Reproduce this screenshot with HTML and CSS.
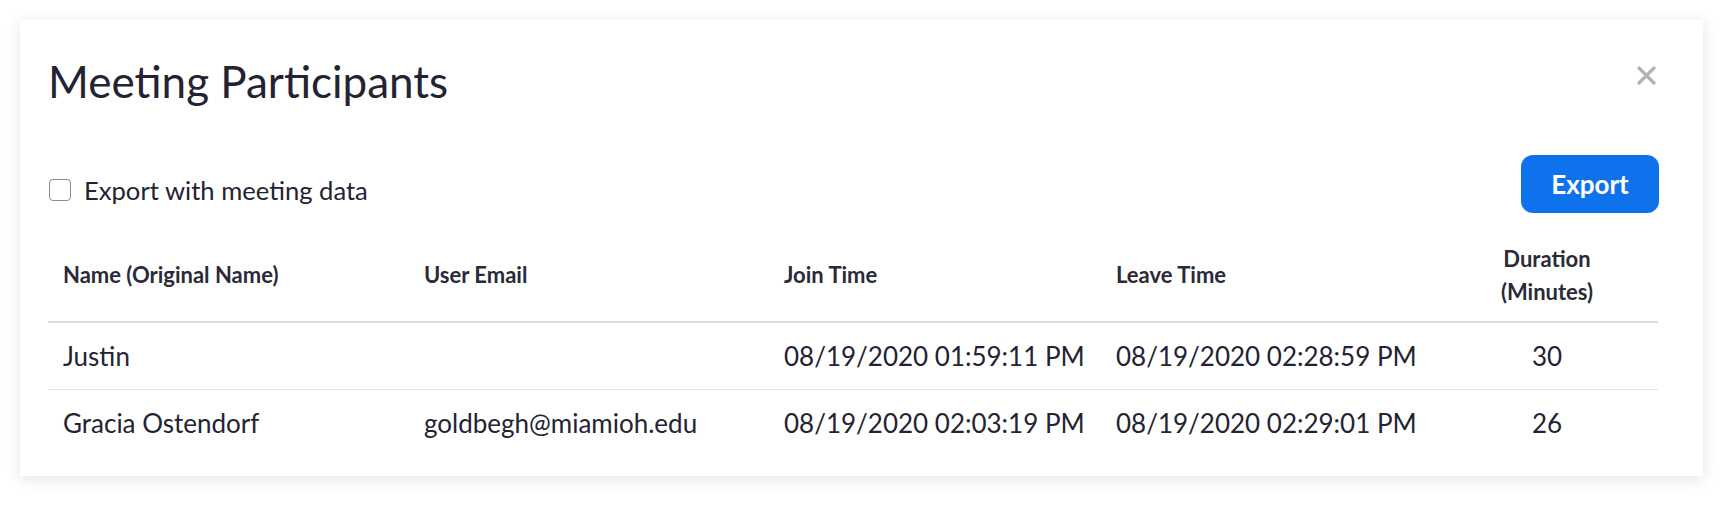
FILE: index.html
```html
<!DOCTYPE html>
<html lang="en">
<head>
<meta charset="utf-8">
<title>Meeting Participants</title>
<link rel="stylesheet" href="styles.css">
</head>
<body>
<div class="page">
  <div class="dialog">
    <div class="dialog-head">
      <h1 class="title">Meeting Participants</h1>
      <button class="close" aria-label="Close">
        <svg width="19" height="19" viewBox="0 0 19 19"><path d="M2 2 L17 17 M17 2 L2 17" stroke="#b3b3b3" stroke-width="3.2" stroke-linecap="round"/></svg>
      </button>
    </div>
    <div class="toolbar">
      <label class="check">
        <span class="box"></span>
        <span class="check-label">Export with meeting data</span>
      </label>
      <button class="export">Export</button>
    </div>
    <div class="table">
      <div class="row head">
        <div class="cell">Name (Original Name)</div>
        <div class="cell">User Email</div>
        <div class="cell">Join Time</div>
        <div class="cell">Leave Time</div>
        <div class="cell num">Duration<br>(Minutes)</div>
      </div>
      <div class="row">
        <div class="cell">Justin</div>
        <div class="cell"></div>
        <div class="cell">08/19/2020 01:59:11 PM</div>
        <div class="cell">08/19/2020 02:28:59 PM</div>
        <div class="cell num">30</div>
      </div>
      <div class="row last">
        <div class="cell">Gracia Ostendorf</div>
        <div class="cell">goldbegh@miamioh.edu</div>
        <div class="cell">08/19/2020 02:03:19 PM</div>
        <div class="cell">08/19/2020 02:29:01 PM</div>
        <div class="cell num">26</div>
      </div>
    </div>
  </div>
</div>
</body>
</html>
```

FILE: styles.css
```css
* { box-sizing: border-box; }
html, body { margin: 0; padding: 0; background: #ffffff; }
body {
  font-family: Lato, "Open Sans", sans-serif;
  color: #232333;
  width: 1736px;
  height: 509px;
  overflow: hidden;
}
.page {
  padding: 20px 0 0 20px;
}
.dialog {
  width: 1683px;
  height: 456px;
  background: #ffffff;
  box-shadow: 0 3px 14px rgba(0, 0, 0, 0.11);
  padding: 35px 44px 0 28px;
}
.dialog-head {
  display: flex;
  justify-content: space-between;
  align-items: flex-start;
}
.title {
  margin: 0;
  font-size: 44px;
  font-weight: 400;
  line-height: 53px;
  color: #232333;
}
.close {
  border: 0;
  background: none;
  padding: 0;
  margin: 11px 3px 0 0;
  width: 19px;
  height: 19px;
  display: block;
}
.close svg { display: block; }
.toolbar {
  margin-top: 47px;
  display: flex;
  justify-content: space-between;
  align-items: center;
}
.check {
  display: flex;
  align-items: center;
  gap: 13px;
  margin-top: 12px;
  margin-left: 1px;
}
.box {
  width: 22px;
  height: 22px;
  border: 1.5px solid #8c8c8c;
  border-radius: 4px;
  background: #fff;
}
.check-label {
  font-size: 25.6px;
  line-height: 30px;
  color: #232333;
}
.export {
  width: 138px;
  height: 58px;
  border: 0;
  border-radius: 12px;
  background: #0e72ed;
  color: #ffffff;
  font-family: Lato, "Open Sans", sans-serif;
  font-weight: 700;
  font-size: 26px;
  padding: 0;
}
.table {
  width: 1610px;
  margin-top: 15px;
}
.row {
  display: grid;
  grid-template-columns: 361px 360px 332px 335px 222px;
  align-items: center;
  height: 67px;
  border-bottom: 1.5px solid #e3e3e6;
}
.row.head {
  height: 95px;
  border-bottom: 2px solid #dcdce0;
}
.row.last { border-bottom: 0; height: 66px; }
.cell {
  padding-left: 15px;
  font-size: 26px;
  line-height: 30px;
  white-space: nowrap;
}
.row.head .cell {
  font-size: 22px;
  font-weight: 700;
  line-height: 33px;
  color: #2a2a38;
}
.cell.num {
  padding-left: 0;
  text-align: center;
}
```
